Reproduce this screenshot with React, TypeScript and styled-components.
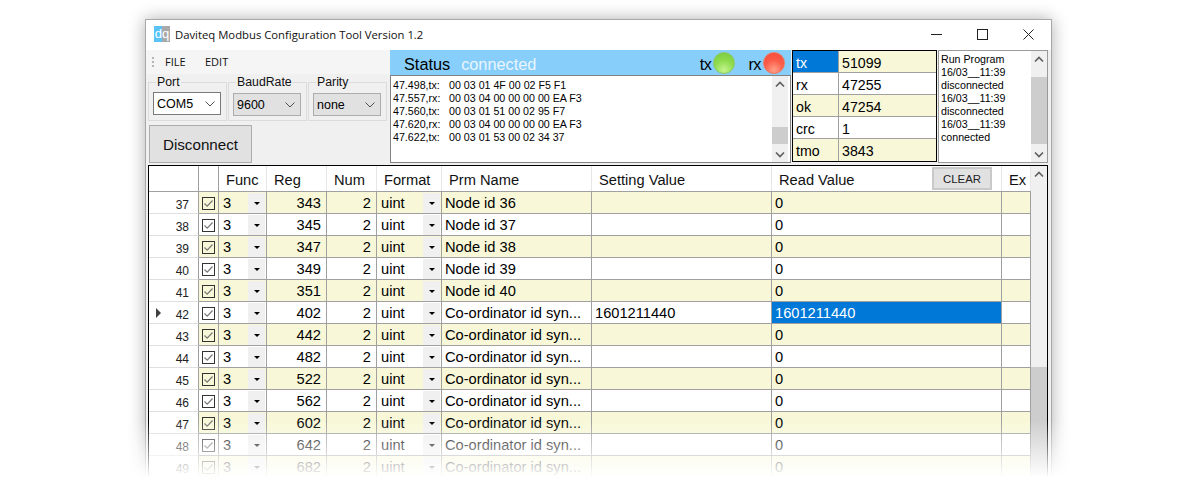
import React from 'react';
import styled, { createGlobalStyle } from 'styled-components';

const GlobalStyle = createGlobalStyle`
  html, body {
    margin: 0;
    height: 498px;
    overflow: hidden;
    background: #fff;
  }
  * {
    box-sizing: border-box;
  }
`;

const Page = styled.div`
  position: relative;
  height: 498px;
  padding: 19px 148px 0 145px;
  overflow: hidden;
  font-family: 'Liberation Sans', Arial, sans-serif;
  color: #000;
`;

const Fade = styled.div`
  position: absolute;
  left: 0;
  right: 0;
  bottom: 0;
  height: 78px;
  background: linear-gradient(rgba(255, 255, 255, 0), #fff 74%);
`;

const Window = styled.div`
  width: 907px;
  height: 520px;
  display: flex;
  flex-direction: column;
  background: #f0f0f0;
  border: 1px solid #a8a8a8;
  box-shadow: 0 0 16px rgba(0, 0, 0, 0.32);
`;

const TitleBar = styled.div`
  height: 30px;
  flex: none;
  display: flex;
  align-items: center;
  background: #fff;
  padding: 0 0 2px 8px;
`;

const Logo = styled.div`
  width: 16px;
  height: 16px;
  display: flex;
  justify-content: center;
  align-items: center;
  background: linear-gradient(90deg, #5cc3f7 50%, #a9a9a9 50%);
  color: #fff;
  font-size: 13px;
  line-height: 14px;
`;

const Title = styled.div`
  margin-left: 5px;
  font-family: 'Open Sans', sans-serif;
  font-size: 11.3px;
  color: #111;
  flex: 1;
`;

const WinButton = styled.div`
  width: 46px;
  height: 28px;
  display: flex;
  align-items: center;
  justify-content: center;
`;

const TopArea = styled.div`
  height: 113px;
  flex: none;
  display: flex;
`;

const LeftPanel = styled.div`
  width: 244px;
  flex: none;
`;

const MenuBar = styled.div`
  height: 24px;
  display: flex;
  align-items: center;
  padding: 0 0 1px 6px;
  background: #f5f5f5;
  font-family: 'Open Sans', sans-serif;
  font-size: 11px;
  color: #111;
`;

const Gripper = styled.div`
  width: 2px;
  height: 10px;
  margin-right: 11px;
  background: repeating-linear-gradient(#b5b5b5 0 2px, transparent 2px 4px);
`;

const MenuItem = styled.span`
  width: 40px;
`;

const Groups = styled.div`
  display: flex;
  gap: 1px;
  padding: 0 0 0 2px;
  margin-top: 2px;
`;

const Group = styled.fieldset`
  width: 79px;
  height: 45px;
  margin: 0;
  padding: 0 0 0 4px;
  border: 1px solid #dcdcdc;
  font-size: 12.3px;
  legend {
    margin-left: 3px;
    padding: 0 1px;
    line-height: 13px;
    color: #111;
  }
`;

const Combo = styled.div<{ $active?: boolean }>`
  width: 68px;
  height: 23px;
  margin-top: ${(p) => (p.$active ? '3px' : '4px')};
  display: flex;
  align-items: center;
  justify-content: space-between;
  padding: 0 5px 0 3px;
  background: ${(p) => (p.$active ? '#fff' : '#e1e1e1')};
  border: 1px solid ${(p) => (p.$active ? '#7a7a7a' : '#adadad')};
  font-size: 12.5px;
`;

const Disconnect = styled.button`
  display: block;
  width: 103px;
  height: 38px;
  margin: 4px 0 0 3px;
  padding: 0;
  background: #e1e1e1;
  border: 1px solid #adadad;
  font-family: 'Liberation Sans', Arial, sans-serif;
  font-size: 15.2px;
  color: #111;
`;

const StatusPanel = styled.div`
  width: 401px;
  flex: none;
  display: flex;
  flex-direction: column;
`;

const StatusHead = styled.div`
  height: 25px;
  flex: none;
  display: flex;
  align-items: center;
  padding: 3px 6px 0 14px;
  background: #87cefa;
  font-size: 16.3px;
`;

const StatusText = styled.span`
  margin-left: 11px;
  flex: 1;
  color: #eaf6ff;
`;

const LedLabel = styled.span`
  margin-right: 2px;
  letter-spacing: -0.5px;
`;

const Led = styled.span<{ $color: 'green' | 'red' }>`
  width: 22px;
  height: 22px;
  margin-top: -3px;
  border-radius: 50%;
  margin-right: ${(p) => (p.$color === 'green' ? '13px' : '0')};
  border: 1px solid ${(p) => (p.$color === 'green' ? '#8cc96a' : '#ef7a66')};
  background: ${(p) =>
    p.$color === 'green'
      ? 'radial-gradient(circle at 50% 85%, #c4f58c, #8edb4e 50%, #78c93a)'
      : 'radial-gradient(circle at 50% 85%, #ffa088, #fb5c48 50%, #f44a38)'};
`;

const ScrollBox = styled.div`
  flex: 1;
  min-height: 0;
  display: flex;
  background: #fff;
  border: 1px solid #828282;
  overflow: hidden;
`;

const LogLines = styled.div`
  flex: 1;
  padding: 3px 0 0 2px;
  font-size: 10.67px;
  line-height: 13px;
  white-space: pre;
`;

const LogRow = styled.div`
  display: flex;
`;

const LogTime = styled.span`
  width: 56px;
`;

const ScrollTrack = styled.div<{ $inset?: boolean }>`
  width: 16px;
  flex: none;
  display: flex;
  flex-direction: column;
  background: #f0f0f0;
  position: relative;
  margin-right: ${(p) => (p.$inset ? '2px' : '0')};
`;

const Thumb = styled.div<{ $top: number; $height: number }>`
  position: absolute;
  left: 0;
  right: 0;
  top: ${(p) => p.$top}px;
  height: ${(p) => p.$height}px;
  background: #cdcdcd;
`;

const ArrowBox = styled.div<{ $bottom?: boolean }>`
  position: absolute;
  left: 0;
  right: 0;
  height: 16px;
  display: flex;
  align-items: center;
  justify-content: center;
  ${(p) => (p.$bottom ? 'bottom: 0;' : 'top: 0;')}
`;

const StatsTable = styled.div`
  width: 145px;
  height: 112px;
  margin-left: 1px;
  flex: none;
  border: 1px solid #000;
  background: #fff;
`;

const StatsRow = styled.div<{ $odd: boolean }>`
  display: grid;
  grid-template-columns: 46px 1fr;
  grid-template-rows: 22px;
  height: 22px;
  overflow: hidden;
  border-bottom: 1px solid #a0a0a0;
  background: ${(p) => (p.$odd ? '#f8f8d8' : '#fff')};
  font-size: 14.2px;
  line-height: 24px;
  &:last-child {
    border-bottom: 0;
  }
`;

const StatsName = styled.div<{ $selected?: boolean }>`
  padding-left: 3px;
  border-right: 1px solid #a0a0a0;
  background: ${(p) => (p.$selected ? '#0078d7' : 'transparent')};
  color: ${(p) => (p.$selected ? '#fff' : '#000')};
`;

const StatsValue = styled.div`
  padding-left: 3px;
`;

const RunLogBox = styled.div`
  width: 110px;
  height: 113px;
  margin-left: 1px;
  flex: none;
  display: flex;
  background: #fff;
  border: 1px solid #9a9a9a;
`;

const RunLogLines = styled.div`
  flex: 1;
  padding: 2px 0 0 2px;
  font-size: 10.67px;
  line-height: 13px;
`;

const TableFrame = styled.div`
  width: 900px;
  flex: 1;
  margin: 2px 0 0 2px;
  display: flex;
  background: #fff;
  border: 1px solid #000;
  border-bottom: 0;
`;

const Grid = styled.div`
  width: 882px;
  flex: none;
`;

const columns = '50px 20px 48px 60px 50px 65px 150px 180px 230px 29px';

const HeadRow = styled.div`
  display: grid;
  grid-template-columns: ${columns};
  height: 26px;
  border-bottom: 1px solid #a0a0a0;
  font-size: 14.67px;
`;

const HeadCell = styled.div<{ $strong?: boolean }>`
  display: flex;
  align-items: center;
  justify-content: space-between;
  padding: 2px 0 0 7px;
  border-right: 1px solid ${(p) => (p.$strong ? '#a0a0a0' : '#e6e6e6')};
  color: #111;
`;

const ClearButton = styled.div`
  width: 60px;
  height: 23px;
  margin: -2px 9px 0 0;
  display: flex;
  align-items: center;
  justify-content: center;
  background: #e1e1e1;
  border: 2px solid #c9c9c9;
  font-size: 11.4px;
  color: #222;
`;

const DataRow = styled.div<{ $odd: boolean }>`
  display: grid;
  grid-template-columns: ${columns};
  grid-template-rows: 22px;
  height: 22px;
  background: ${(p) => (p.$odd ? '#f8f8d8' : '#fff')};
  font-size: 14.67px;
  line-height: 23px;
`;

const RowHeader = styled.div`
  position: relative;
  padding: 2px 9px 0 0;
  text-align: right;
  background: #fff;
  border-right: 1px solid #a0a0a0;
  border-bottom: 1px solid #e0e0e0;
  font-size: 12px;
  color: #222;
`;

const RowPointer = styled.span`
  position: absolute;
  left: 7px;
  top: 6px;
  border-left: 5px solid #404040;
  border-top: 5px solid transparent;
  border-bottom: 5px solid transparent;
`;

const Cell = styled.div<{ $align?: 'right'; $selected?: boolean }>`
  min-width: 0;
  padding: ${(p) => (p.$align === 'right' ? '0 5px 0 0' : '0 0 0 3px')};
  text-align: ${(p) => p.$align ?? 'left'};
  white-space: nowrap;
  overflow: hidden;
  border-right: 1px solid #a0a0a0;
  border-bottom: 1px solid #a0a0a0;
  background: ${(p) => (p.$selected ? '#0078d7' : 'transparent')};
  color: ${(p) => (p.$selected ? '#fff' : '#000')};
`;

const CheckCell = styled(Cell)`
  display: flex;
  align-items: center;
  justify-content: center;
  padding: 1px 0 0;
`;

const DropCell = styled(Cell)`
  display: flex;
  justify-content: space-between;
  padding: 1px 1px 0 4px;
  line-height: 21px;
`;

const DropButton = styled.span`
  width: 17px;
  display: flex;
  align-items: center;
  justify-content: center;
  background: #f0f0f0;
  &::after {
    content: '';
    border-top: 3px solid #000;
    border-left: 3px solid transparent;
    border-right: 3px solid transparent;
  }
`;

const Chevron = ({ up }: { up?: boolean }) => (
  <svg width="10" height="7" viewBox="0 0 10 7">
    <path
      d={up ? 'M1 5.5 L5 1.5 L9 5.5' : 'M1 1.5 L5 5.5 L9 1.5'}
      fill="none"
      stroke="#606060"
      strokeWidth="1.7"
    />
  </svg>
);

const ComboChevron = () => (
  <svg width="10" height="6" viewBox="0 0 10 6">
    <path d="M0.5 0.5 L5 5 L9.5 0.5" fill="none" stroke="#505050" strokeWidth="1" />
  </svg>
);

const Scrollbar = ({ top, height, inset }: { top: number; height: number; inset?: boolean }) => (
  <ScrollTrack $inset={inset}>
    <ArrowBox>
      <Chevron up />
    </ArrowBox>
    <Thumb $top={top} $height={height} />
    <ArrowBox $bottom>
      <Chevron />
    </ArrowBox>
  </ScrollTrack>
);

const CheckBox = () => (
  <svg width="13" height="13" viewBox="0 0 13 13">
    <rect x="0.5" y="0.5" width="12" height="12" fill="none" stroke="#333" />
    <path d="M2.5 6.5 L5.2 9.2 L10.5 3.5" fill="none" stroke="#777" strokeWidth="1.2" />
  </svg>
);

const logLines = [
  ['47.498,tx:', '00 03 01 4F 00 02 F5 F1'],
  ['47.557,rx:', '00 03 04 00 00 00 00 EA F3'],
  ['47.560,tx:', '00 03 01 51 00 02 95 F7'],
  ['47.620,rx:', '00 03 04 00 00 00 00 EA F3'],
  ['47.622,tx:', '00 03 01 53 00 02 34 37'],
];

const stats = [
  ['tx', '51099'],
  ['rx', '47255'],
  ['ok', '47254'],
  ['crc', '1'],
  ['tmo', '3843'],
];

const runLog = [
  'Run Program',
  '16/03__11:39',
  'disconnected',
  '16/03__11:39',
  'disconnected',
  '16/03__11:39',
  'connected',
];

const rows = [
  { id: 37, reg: 343, name: 'Node id 36' },
  { id: 38, reg: 345, name: 'Node id 37' },
  { id: 39, reg: 347, name: 'Node id 38' },
  { id: 40, reg: 349, name: 'Node id 39' },
  { id: 41, reg: 351, name: 'Node id 40' },
  { id: 42, reg: 402, name: 'Co-ordinator id syn...' },
  { id: 43, reg: 442, name: 'Co-ordinator id syn...' },
  { id: 44, reg: 482, name: 'Co-ordinator id syn...' },
  { id: 45, reg: 522, name: 'Co-ordinator id syn...' },
  { id: 46, reg: 562, name: 'Co-ordinator id syn...' },
  { id: 47, reg: 602, name: 'Co-ordinator id syn...' },
  { id: 48, reg: 642, name: 'Co-ordinator id syn...' },
  { id: 49, reg: 682, name: 'Co-ordinator id syn...' },
];

const App: React.FC = () => {
  return (
    <Page>
      <GlobalStyle />
      <Window>
        <TitleBar>
          <Logo>dq</Logo>
          <Title>Daviteq Modbus Configuration Tool Version 1.2</Title>
          <WinButton>
            <svg width="11" height="11" viewBox="0 0 11 11">
              <path d="M0 5.5 H11" stroke="#222" />
            </svg>
          </WinButton>
          <WinButton>
            <svg width="11" height="11" viewBox="0 0 11 11">
              <rect x="0.5" y="0.5" width="10" height="10" fill="none" stroke="#222" />
            </svg>
          </WinButton>
          <WinButton>
            <svg width="11" height="11" viewBox="0 0 11 11">
              <path d="M0.5 0.5 L10.5 10.5 M10.5 0.5 L0.5 10.5" stroke="#222" />
            </svg>
          </WinButton>
        </TitleBar>

        <TopArea>
          <LeftPanel>
            <MenuBar>
              <Gripper />
              <MenuItem>FILE</MenuItem>
              <MenuItem>EDIT</MenuItem>
            </MenuBar>
            <Groups>
              <Group>
                <legend>Port</legend>
                <Combo $active>
                  COM5
                  <ComboChevron />
                </Combo>
              </Group>
              <Group>
                <legend>BaudRate</legend>
                <Combo>
                  9600
                  <ComboChevron />
                </Combo>
              </Group>
              <Group>
                <legend>Parity</legend>
                <Combo>
                  none
                  <ComboChevron />
                </Combo>
              </Group>
            </Groups>
            <Disconnect>Disconnect</Disconnect>
          </LeftPanel>

          <StatusPanel>
            <StatusHead>
              Status
              <StatusText>connected</StatusText>
              <LedLabel>tx</LedLabel>
              <Led $color="green" />
              <LedLabel>rx</LedLabel>
              <Led $color="red" />
            </StatusHead>
            <ScrollBox>
              <LogLines>
                {logLines.map(([time, bytes]) => (
                  <LogRow key={time}>
                    <LogTime>{time}</LogTime>
                    {bytes}
                  </LogRow>
                ))}
              </LogLines>
              <Scrollbar top={51} height={17} inset />
            </ScrollBox>
          </StatusPanel>

          <StatsTable>
            {stats.map(([name, value], i) => (
              <StatsRow key={name} $odd={i % 2 === 0}>
                <StatsName $selected={i === 0}>{name}</StatsName>
                <StatsValue>{value}</StatsValue>
              </StatsRow>
            ))}
          </StatsTable>

          <RunLogBox>
            <RunLogLines>
              {runLog.map((line, i) => (
                <div key={i}>{line}</div>
              ))}
            </RunLogLines>
            <Scrollbar top={26} height={67} />
          </RunLogBox>
        </TopArea>

        <TableFrame>
          <Grid>
            <HeadRow>
              <HeadCell $strong />
              <HeadCell $strong />
              <HeadCell>Func</HeadCell>
              <HeadCell>Reg</HeadCell>
              <HeadCell>Num</HeadCell>
              <HeadCell>Format</HeadCell>
              <HeadCell>Prm Name</HeadCell>
              <HeadCell>Setting Value</HeadCell>
              <HeadCell>
                Read Value
                <ClearButton>CLEAR</ClearButton>
              </HeadCell>
              <HeadCell>Ex</HeadCell>
            </HeadRow>
            {rows.map((row, i) => {
              const selected = row.id === 42;
              return (
                <DataRow key={row.id} $odd={i % 2 === 0}>
                  <RowHeader>
                    {selected && <RowPointer />}
                    {row.id}
                  </RowHeader>
                  <CheckCell>
                    <CheckBox />
                  </CheckCell>
                  <DropCell>
                    3
                    <DropButton />
                  </DropCell>
                  <Cell $align="right">{row.reg}</Cell>
                  <Cell $align="right">2</Cell>
                  <DropCell>
                    uint
                    <DropButton />
                  </DropCell>
                  <Cell>{row.name}</Cell>
                  <Cell>{selected ? '1601211440' : ''}</Cell>
                  <Cell $selected={selected}>{selected ? '1601211440' : '0'}</Cell>
                  <Cell />
                </DataRow>
              );
            })}
          </Grid>
          <Scrollbar top={201} height={320} />
        </TableFrame>
      </Window>
      <Fade />
    </Page>
  );
};

export default App;
